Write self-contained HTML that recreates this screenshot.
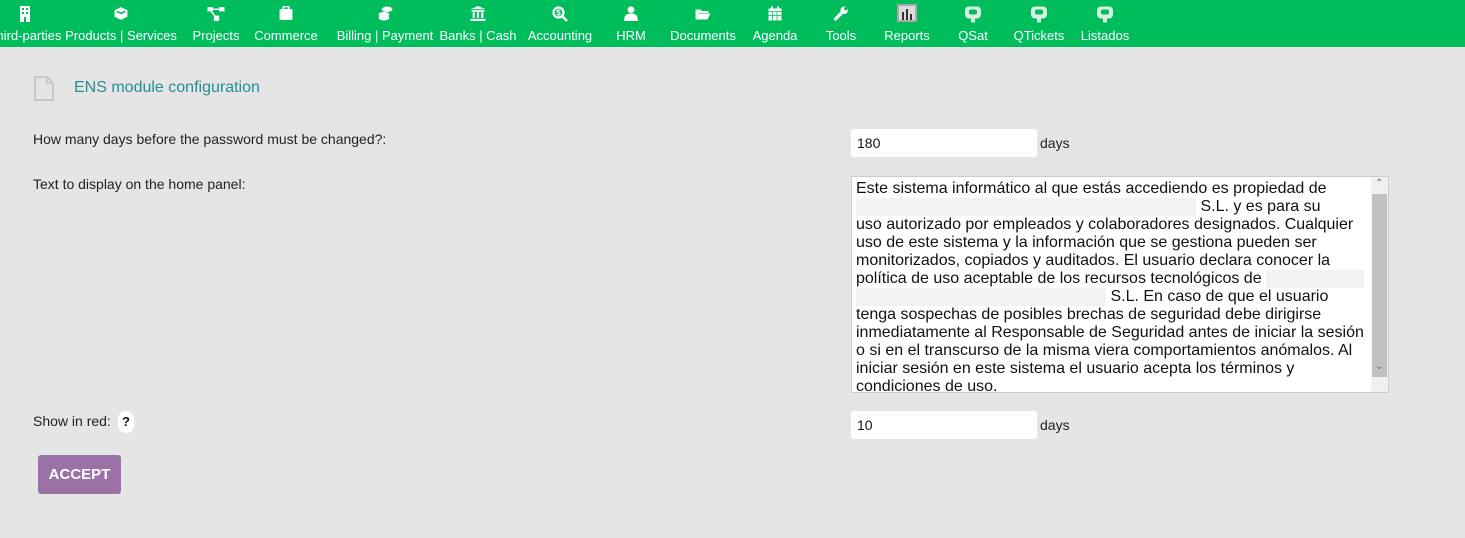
<!DOCTYPE html>
<html><head><meta charset="utf-8"><style>
*{margin:0;padding:0;box-sizing:border-box}
body{width:1465px;height:538px;background:#e5e5e5;font-family:"Liberation Sans",Arial,sans-serif;position:relative;overflow:hidden;color:#111}
.nav{position:absolute;left:0;top:0;width:1465px;height:47px;background:#00bd5c}
.it{position:absolute;top:0;height:47px;transform:translateX(-50%);text-align:center;color:#fff;font-size:13px;white-space:nowrap}
.it svg{position:absolute;left:50%;top:6px;transform:translateX(-50%)}
.it span{position:absolute;top:28px;left:50%;transform:translateX(-50%)}
.abs{position:absolute}
.lbl{font-size:14px;color:#222}
.inp{position:absolute;left:851px;width:186px;height:28px;background:#fff;border-radius:3px;font-size:14px;padding:6px 0 0 6px}
.ta{position:absolute;left:851px;top:176px;width:538px;height:217px;background:#fff;border:1px solid #ccc;overflow:hidden}
.ta .t{position:absolute;left:4px;top:3px;font-size:16px;line-height:18px;color:#111;white-space:nowrap}
.blur{display:inline-block;background:#f2f2f2;height:18px;vertical-align:top}
</style></head><body>
<div class="nav">
<div class="it" style="left:25px"><svg width="12" height="16" viewBox="0 0 12 16"><rect x="1" y="0" width="10" height="16" fill="#fff"/><g fill="#00bd5c"><rect x="3" y="2" width="2" height="2"/><rect x="7" y="2" width="2" height="2"/><rect x="3" y="6" width="2" height="2"/><rect x="7" y="6" width="2" height="2"/><rect x="5" y="11" width="2" height="5"/></g></svg><span>Third-parties</span></div>
<div class="it" style="left:121px"><svg width="15" height="15" viewBox="0 0 14 14"><path d="M7 1l6 3v6l-6 3-6-3V4z" fill="#fff"/><path d="M3 5l4 2 4-2" stroke="#00bd5c" stroke-width="1.5" fill="none"/></svg><span>Products | Services</span></div>
<div class="it" style="left:216px"><svg width="17" height="15" viewBox="0 0 16 14"><rect x="0" y="1" width="5" height="4" fill="#fff"/><rect x="11" y="1" width="5" height="4" fill="#fff"/><rect x="6" y="9" width="5" height="5" fill="#fff"/><path d="M4 3h8M3 4l5 7" stroke="#fff" stroke-width="1.5"/></svg><span>Projects</span></div>
<div class="it" style="left:286px"><svg width="15" height="15" viewBox="0 0 14 14"><rect x="1" y="3" width="12" height="10" fill="#fff"/><rect x="4.5" y="0.5" width="5" height="3" fill="none" stroke="#fff" stroke-width="1.5"/></svg><span>Commerce</span></div>
<div class="it" style="left:385px"><svg width="15" height="15" viewBox="0 0 14 14"><ellipse cx="9" cy="3" rx="5" ry="2.5" fill="#fff"/><ellipse cx="6" cy="8" rx="5" ry="2.5" fill="#fff"/><ellipse cx="6" cy="11" rx="5" ry="2.5" fill="#fff"/></svg><span>Billing | Payment</span></div>
<div class="it" style="left:478px"><svg width="15" height="15" viewBox="0 0 14 14"><path d="M7 0l7 3H0z" fill="#fff"/><rect x="1" y="4" width="12" height="1.5" fill="#fff"/><rect x="2" y="6" width="2" height="5" fill="#fff"/><rect x="6" y="6" width="2" height="5" fill="#fff"/><rect x="10" y="6" width="2" height="5" fill="#fff"/><rect x="0" y="12" width="14" height="2" fill="#fff"/></svg><span>Banks | Cash</span></div>
<div class="it" style="left:560px"><svg width="16" height="16" viewBox="0 0 16 16"><circle cx="6.5" cy="6.5" r="5" fill="none" stroke="#fff" stroke-width="2.2"/><path d="M10 10l5 5" stroke="#fff" stroke-width="2.5"/><text x="6.5" y="9.5" font-size="8" font-weight="bold" fill="#fff" text-anchor="middle" font-family="Liberation Sans">$</text></svg><span>Accounting</span></div>
<div class="it" style="left:631px"><svg width="14" height="15" viewBox="0 0 13 14"><circle cx="6.5" cy="3.5" r="3.2" fill="#fff"/><path d="M0 14c0-5 2-7 6.5-7s6.5 2 6.5 7z" fill="#fff"/></svg><span>HRM</span></div>
<div class="it" style="left:703px"><svg width="15" height="13" viewBox="0 0 15 12" style="top:8px"><path d="M0 1h5l1.5 1.5H13v2H3L0 11z" fill="#fff"/><path d="M3 5h12l-3 6H0z" fill="#fff"/></svg><span>Documents</span></div>
<div class="it" style="left:775px"><svg width="13" height="15" viewBox="0 0 13 14"><rect x="0" y="2" width="13" height="12" fill="#fff"/><rect x="2.5" y="0" width="2" height="3" fill="#fff"/><rect x="8.5" y="0" width="2" height="3" fill="#fff"/><path d="M0 5h13M4 5v9M8.5 5v9M0 9h13" stroke="#00bd5c" stroke-width="0.8"/></svg><span>Agenda</span></div>
<div class="it" style="left:841px"><svg width="15" height="15" viewBox="0 0 14 14"><path d="M1 13l7-7" stroke="#fff" stroke-width="3"/><circle cx="10" cy="4" r="3.5" fill="#fff"/><circle cx="11.5" cy="2.5" r="1.6" fill="#00bd5c"/></svg><span>Tools</span></div>
<div class="it" style="left:907px"><svg width="20" height="18" viewBox="0 0 20 18" style="top:4px"><rect x="0" y="0" width="20" height="18" fill="#aaa"/><rect x="2" y="2" width="16" height="14" fill="#ddd"/><rect x="5" y="8" width="2" height="8" fill="#333"/><rect x="9" y="5" width="2" height="11" fill="#333"/><rect x="13" y="10" width="2" height="6" fill="#333"/></svg><span>Reports</span></div>
<div class="it" style="left:973px"><svg width="16" height="17" viewBox="0 0 16 16"><rect x="0" y="0" width="16" height="12" rx="4" fill="#d8f0e0"/><rect x="4" y="3" width="8" height="5" rx="2" fill="#00bd5c"/><rect x="6" y="8" width="4" height="8" fill="#d8f0e0"/></svg><span>QSat</span></div>
<div class="it" style="left:1039px"><svg width="16" height="17" viewBox="0 0 16 16"><rect x="0" y="0" width="16" height="12" rx="4" fill="#d8f0e0"/><rect x="4" y="3" width="8" height="5" rx="2" fill="#00bd5c"/><rect x="6" y="8" width="4" height="8" fill="#d8f0e0"/></svg><span>QTickets</span></div>
<div class="it" style="left:1105px"><svg width="16" height="17" viewBox="0 0 16 16"><rect x="0" y="0" width="16" height="12" rx="4" fill="#d8f0e0"/><rect x="4" y="3" width="8" height="5" rx="2" fill="#00bd5c"/><rect x="6" y="8" width="4" height="8" fill="#d8f0e0"/></svg><span>Listados</span></div>
</div>

<svg class="abs" style="left:34px;top:76px" width="20" height="25" viewBox="0 0 20 25"><path d="M1 1h12l6 6v17H1z" fill="none" stroke="#c8c8c8" stroke-width="2"/><path d="M13 1v6h6" fill="none" stroke="#c8c8c8" stroke-width="2"/></svg>
<div class="abs" style="left:74px;top:79px;font-size:16px;color:#258e8e">ENS module configuration</div>

<div class="abs lbl" style="left:33px;top:131px">How many days before the password must be changed?:</div>
<div class="inp" style="top:129px">180</div>
<div class="abs lbl" style="left:1040px;top:135px">days</div>

<div class="abs lbl" style="left:33px;top:176px">Text to display on the home panel:</div>
<div class="ta"><div class="t">
Este sistema informático al que estás accediendo es propiedad de<br>
<span class="blur" style="width:340px"></span> S.L. y es para su<br>
uso autorizado por empleados y colaboradores designados. Cualquier<br>
uso de este sistema y la información que se gestiona pueden ser<br>
monitorizados, copiados y auditados. El usuario declara conocer la<br>
política de uso aceptable de los recursos tecnológicos de <span class="blur" style="width:98px"></span><br>
<span class="blur" style="width:250px"></span> S.L. En caso de que el usuario<br>
tenga sospechas de posibles brechas de seguridad debe dirigirse<br>
inmediatamente al Responsable de Seguridad antes de iniciar la sesión<br>
o si en el transcurso de la misma viera comportamientos anómalos. Al<br>
iniciar sesión en este sistema el usuario acepta los términos y<br>
condiciones de uso.</div>
<div class="abs" style="left:519px;top:0;width:17px;height:215px;background:#f0f0f0"></div>
<div class="abs" style="left:520px;top:17px;width:15px;height:183px;background:#c1c1c1"></div>
<div class="abs" style="left:523px;top:1px;font-size:10px;color:#666">&#8963;</div>
<div class="abs" style="left:523px;top:184px;font-size:10px;color:#666">&#8964;</div>
</div>

<div class="abs lbl" style="left:33px;top:413px">Show in red:</div>
<div class="abs" style="left:118px;top:411px;width:16px;height:22px;background:#fff;border-radius:8px;font-size:13px;font-weight:bold;text-align:center;line-height:22px">?</div>
<div class="inp" style="top:411px">10</div>
<div class="abs lbl" style="left:1040px;top:417px">days</div>

<div class="abs" style="left:38px;top:455px;width:83px;height:39px;background:#9a72a6;border-radius:3px;color:#fff;font-weight:bold;font-size:15px;text-align:center;line-height:39px">ACCEPT</div>
</body></html>
